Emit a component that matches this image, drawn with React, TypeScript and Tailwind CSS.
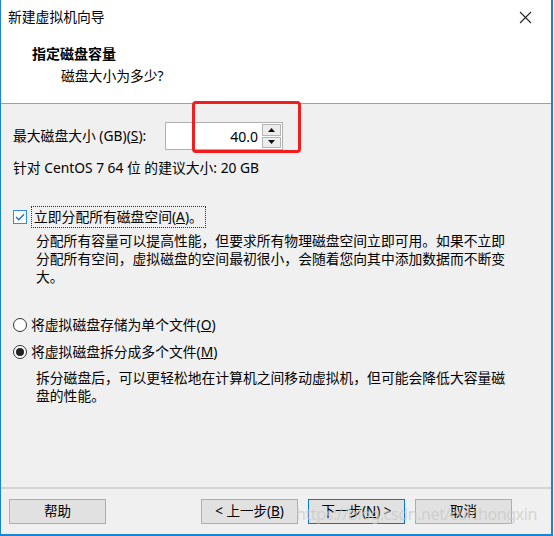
import { memo } from 'react';

const FONT = { fontFamily: '"Noto Sans", "Noto Sans CJK SC", sans-serif' };

interface ButtonProps {
  label: React.ReactNode;
  primary?: boolean;
}

const DialogButton = memo(function DialogButton({ label, primary }: ButtonProps) {
  return (
    <button
      className={
        primary
          ? 'w-[97px] h-[25px] bg-[#e1e1e1] border border-[#0078d7] text-[13.5px] text-black flex items-center justify-center'
          : 'w-[97px] h-[25px] bg-[#e1e1e1] border border-[#adadad] text-[13.5px] text-black flex items-center justify-center'
      }
    >
      {label}
    </button>
  );
});

const Radio = memo(function Radio({ checked }: { checked?: boolean }) {
  return (
    <span className="w-[14px] h-[14px] rounded-full border border-[#333] bg-white flex items-center justify-center shrink-0">
      {checked && <span className="w-[8px] h-[8px] rounded-full bg-[#222]" />}
    </span>
  );
});

export default function App() {
  return (
    <div
      className="relative w-[554px] h-[536px] bg-white flex flex-col text-black"
      style={FONT}
    >
      <div className="flex-1 flex flex-col border-l border-r-2 border-b-2 border-[#1883d7] bg-[#f0f0f0] mr-[1px]">
        {/* Title bar */}
        <div className="h-[34px] bg-white flex items-center justify-between pl-[7px] pr-[19px] shrink-0">
          <span className="text-[13.8px] leading-none">新建虚拟机向导</span>
          <svg width="13" height="13" viewBox="0 0 13 13">
            <path d="M1 1L12 12M12 1L1 12" stroke="#222" strokeWidth="1.1" />
          </svg>
        </div>

        {/* Header */}
        <div className="h-[70px] bg-white border-b border-[#a0a0a0] pl-[31px] pt-[10px] shrink-0">
          <p className="text-[14px] font-bold leading-[20px]">指定磁盘容量</p>
          <p className="text-[13.8px] leading-[20px] mt-[2px] pl-[29px]">磁盘大小为多少?</p>
        </div>

        {/* Body */}
        <div className="flex-1 flex flex-col pl-[12px] text-[13.8px]">
          <div className="flex items-center h-[28px] mt-[18px]">
            <span className="w-[152px]">
              最大磁盘大小 (GB)(<span className="underline">S</span>):
            </span>
            <div className="w-[118px] h-[28px] bg-white border border-[#b0b0b0] flex items-center">
              <span className="flex-1 text-right pr-[4px] text-[14px]">40.0</span>
              <div className="w-[19px] h-[24px] mr-[1px] flex flex-col gap-[1px]">
                <div className="flex-1 bg-[#ececec] border border-[#b5b5b5] flex items-center justify-center">
                  <svg width="7" height="4" viewBox="0 0 7 4">
                    <path d="M3.5 0L7 4H0Z" fill="#111" />
                  </svg>
                </div>
                <div className="flex-1 bg-[#ececec] border border-[#b5b5b5] flex items-center justify-center">
                  <svg width="7" height="4" viewBox="0 0 7 4">
                    <path d="M0 0H7L3.5 4Z" fill="#111" />
                  </svg>
                </div>
              </div>
            </div>
          </div>

          <p className="leading-[20px] mt-[8px]">针对 CentOS 7 64 位 的建议大小: 20 GB</p>

          <div className="flex items-center mt-[28px] h-[22px]">
            <span className="w-[14px] h-[14px] border border-[#2e8ee6] bg-white flex items-center justify-center shrink-0">
              <svg width="10" height="8" viewBox="0 0 10 8">
                <path d="M1 4L3.8 6.8L9 1.2" stroke="#1d6fd1" strokeWidth="1.4" fill="none" />
              </svg>
            </span>
            <span className="ml-[4px] h-[22px] px-[2px] border border-dotted border-[#333] flex items-center">
              立即分配所有磁盘空间(<span className="underline">A</span>)。
            </span>
          </div>
          <p className="leading-[18px] mt-[4px] ml-[23px] w-[478px]">
            分配所有容量可以提高性能，但要求所有物理磁盘空间立即可用。如果不立即分配所有空间，虚拟磁盘的空间最初很小，会随着您向其中添加数据而不断变大。
          </p>

          <div className="flex items-center gap-[4px] mt-[29px] h-[20px]">
            <Radio />
            <span>
              将虚拟磁盘存储为单个文件(<span className="underline">O</span>)
            </span>
          </div>
          <div className="flex items-center gap-[4px] mt-[7px] h-[20px]">
            <Radio checked />
            <span>
              将虚拟磁盘拆分成多个文件(<span className="underline">M</span>)
            </span>
          </div>
          <p className="leading-[18px] mt-[7px] ml-[23px] w-[478px]">
            拆分磁盘后，可以更轻松地在计算机之间移动虚拟机，但可能会降低大容量磁盘的性能。
          </p>
        </div>

        {/* Footer */}
        <div className="h-[47px] border-t-2 border-[#d4d4d4] flex items-start pt-[10px] pl-[8px] shrink-0">
          <DialogButton label="帮助" />
          <div className="ml-[95px] flex gap-[10px]">
            <DialogButton label={<>&lt; 上一步(<span className="underline">B</span>)</>} />
            <DialogButton primary label={<>下一步(<span className="underline">N</span>) &gt;</>} />
            <DialogButton label="取消" />
          </div>
        </div>
      </div>

      {/* Red highlight */}
      <div className="absolute left-[192px] top-[101px] w-[109px] h-[52px] border-[3px] border-[#f21d1d] rounded-[4px]" />

      {/* Watermark */}
      <span className="absolute left-[296px] top-[502px] text-[16px] text-[#c8c8c8]/70 tracking-tight">
        https://blog.csdn.net/cuichongxin
      </span>
    </div>
  );
}
